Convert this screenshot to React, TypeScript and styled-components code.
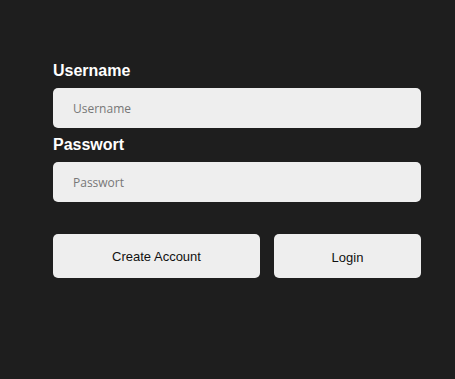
import * as React from 'react';
import styled, { createGlobalStyle } from 'styled-components';

const GlobalStyle = createGlobalStyle`
  html, body {
    margin: 0;
    padding: 0;
    background: #1e1e1e;
  }
`;

const Page = styled.div`
  min-height: 379px;
  background: #1e1e1e;
  padding: 60px 0 0 53px;
  box-sizing: border-box;
`;

const Form = styled.form`
  width: 368px;
  display: flex;
  flex-direction: column;
`;

const Label = styled.label`
  font-family: 'Liberation Sans', Arial, sans-serif;
  font-weight: 700;
  font-size: 16px;
  line-height: 19px;
  padding-top: 1px;
  color: #ffffff;
  margin-bottom: 8px;
`;

const Input = styled.input`
  height: 40px;
  box-sizing: border-box;
  border: none;
  border-radius: 5px;
  background: #eeeeee;
  padding: 0 20px;
  font-family: 'Open Sans', sans-serif;
  font-size: 12px;
  color: #222;
  outline: none;
  margin-bottom: 6px;

  &::placeholder {
    color: #777777;
  }
`;

const Buttons = styled.div`
  display: flex;
  gap: 14px;
  margin-top: 26px;
`;

const Button = styled.button<{ $width: number; $shift?: number }>`
  width: ${(p) => p.$width}px;
  height: 44px;
  border: none;
  border-radius: 5px;
  background: #eeeeee;
  color: #111;
  font-family: 'Liberation Sans', Arial, sans-serif;
  font-size: 13px;
  padding: ${(p) => p.$shift ?? 0}px 0 0;
  cursor: pointer;
`;

export default function App() {
  return (
    <Page>
      <GlobalStyle />
      <Form onSubmit={(e) => e.preventDefault()}>
        <Label htmlFor="user">Username</Label>
        <Input id="user" placeholder="Username" />
        <Label htmlFor="pass">Passwort</Label>
        <Input id="pass" type="password" placeholder="Passwort" />
        <Buttons>
          <Button type="button" $width={207}>
            Create Account
          </Button>
          <Button type="submit" $width={147} $shift={2}>
            Login
          </Button>
        </Buttons>
      </Form>
    </Page>
  );
}
